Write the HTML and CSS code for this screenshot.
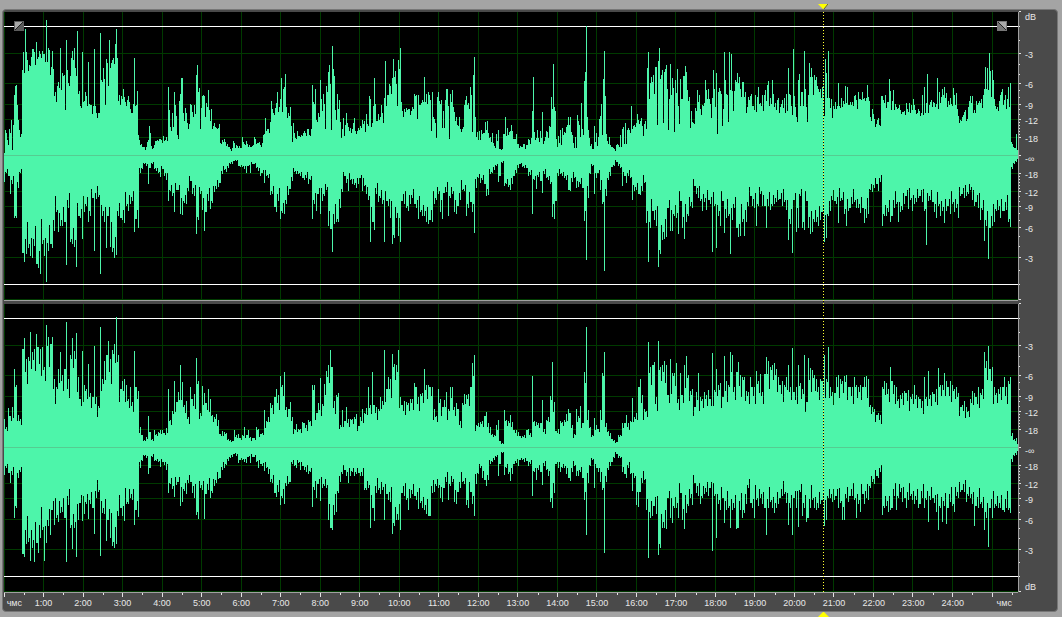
FILE: index.html
```html
<!DOCTYPE html>
<html lang="ru">
<head>
<meta charset="utf-8">
<title>Waveform</title>
<link rel="stylesheet" href="styles.css">
</head>
<body>
<main class="editor">
  <section class="track" aria-label="Left channel">
    <svg class="wave" data-channel="left" viewBox="0 0 1014 288" preserveAspectRatio="none"></svg>
    <div class="scale">
      <svg class="scale-ticks" viewBox="0 0 4 288" preserveAspectRatio="none"></svg>
      <div class="scale-labels">
        <span>dB</span><span>-3</span><span>-6</span><span>-9</span><span>-12</span><span>-18</span><span>-∞</span><span>-18</span><span>-12</span><span>-9</span><span>-6</span><span>-3</span><span></span>
      </div>
    </div>
  </section>
  <section class="track" aria-label="Right channel">
    <svg class="wave" data-channel="right" viewBox="0 0 1014 288" preserveAspectRatio="none"></svg>
    <div class="scale">
      <svg class="scale-ticks" viewBox="0 0 4 288" preserveAspectRatio="none"></svg>
      <div class="scale-labels">
        <span></span><span>-3</span><span>-6</span><span>-9</span><span>-12</span><span>-18</span><span>-∞</span><span>-18</span><span>-12</span><span>-9</span><span>-6</span><span>-3</span><span>dB</span>
      </div>
    </div>
  </section>
  <footer class="ruler">
    <svg class="ruler-ticks" viewBox="0 0 1014 4" preserveAspectRatio="none"></svg>
    <div class="ruler-labels">
      <span class="unit">чмс</span><span>1:00</span><span>2:00</span><span>3:00</span><span>4:00</span><span>5:00</span><span>6:00</span><span>7:00</span><span>8:00</span><span>9:00</span><span>10:00</span><span>11:00</span><span>12:00</span><span>13:00</span><span>14:00</span><span>15:00</span><span>16:00</span><span>17:00</span><span>18:00</span><span>19:00</span><span>20:00</span><span>21:00</span><span>22:00</span><span>23:00</span><span>24:00</span><span class="unit unit-end">чмс</span>
    </div>
  </footer>
</main>
<div class="cursor">
  <svg class="cursor-mark" viewBox="0 0 11 5"><path d="M0 0H11L6 5H5Z" fill="#ff0"/><path d="M10 0L6 5" stroke="#555" fill="none"/></svg>
  <div class="cursor-line"></div>
  <svg class="cursor-mark" viewBox="0 0 11 5"><path d="M5 0H6L11 5H0Z" fill="#ff0"/></svg>
</div>
<script src="wave.js"></script>
</body>
</html>
```
FILE: styles.css
```css
* { box-sizing: border-box; }

body {
  margin: 0;
  min-height: 100vh;
  padding: 9px 4px 5px 2px;
  display: flex;
  position: relative;
  background: #a4a4a4;
  font-family: "Liberation Sans", Arial, sans-serif;
  font-size: 9px;
  line-height: 10px;
  color: #e8e8e8;
}

.editor {
  flex: 1;
  min-width: 0;
  display: flex;
  flex-direction: column;
  padding: 2px 0 0 1px;
  background: #4a4a4a;
  border: 1px solid #777;
  border-radius: 4px;
}

.track {
  flex: 1;
  min-height: 0;
  display: grid;
  grid-template-columns: minmax(0, 1fr) 39px;
}

.track + .track { margin-top: 3px; }

.wave {
  display: block;
  width: 100%;
  height: 100%;
  min-height: 0;
  background: #000;
  border-bottom: 1px solid #a0a0a0;
  shape-rendering: crispEdges;
}

.grid-lines { fill: #003a00; }
.level { fill: #fff; }
.signal { fill: #4df5aa; }
.zero { fill: #55cc91; }

.scale {
  display: flex;
  gap: 3px;
  min-height: 0;
  padding-bottom: 1px;
}

.scale-ticks {
  width: 4px;
  height: 100%;
  border-left: 1px solid #a0a0a0;
  overflow: visible;
  shape-rendering: crispEdges;
}

.scale-ticks path, .ruler-ticks path { fill: #e4e4e4; }

.scale-labels {
  flex: 1;
  display: grid;
  grid-template-rows: 38fr 30fr 21fr 15fr 18fr 20fr 16fr 18fr 15fr 21fr 30fr 36fr 10fr;
}

.scale-labels span { min-height: 0; }

.ruler {
  height: 18px;
  padding-right: 39px;
}

.ruler-ticks {
  display: block;
  width: 100%;
  height: 4px;
  shape-rendering: crispEdges;
}

.ruler-labels {
  display: grid;
  grid-template-columns: 1fr repeat(24, 2fr) minmax(0, 2fr);
  padding: 1px 6px 0 0;
  text-align: center;
  white-space: nowrap;
}

.ruler-labels span { min-width: 0; }
.unit { padding-left: 1px; }
.unit-end { text-align: right; }

/* Play cursor spans both channels and the margins around them */
.cursor {
  position: absolute;
  top: 4px;
  bottom: 0;
  left: 77%;
  width: 11px;
  display: flex;
  flex-direction: column;
  align-items: center;
  pointer-events: none;
}

.cursor-mark { width: 11px; height: 5px; }

.cursor-line {
  flex: 1;
  width: 1px;
  margin: 3px 0 20px;
  background: repeating-linear-gradient(#ffff30 0 1px, #000 1px 2px, transparent 2px 3px);
}
```
FILE: wave.js
```
// Peak heights by start column; each row covers 20 columns.
// A row holds either one value per column or one value per pair of columns.
const peaks = {
  left: {
    up: `4: 2 25 22 15 10 26 22 35 5 30 60 69 70 50 35 25 18 21 85 103
24: 82 126 103 95 84 90 89 98 106 106 103 90 113 96 98 104 101 97 104 101
44: 101 93 135 93 107 105 80 88 104 86 59 63 53 69 73 67 107 65 82 79
64: 80 45 115 85 72 69 79 97 104 95 107 87 79 124 61 64 49 47 103 53
84: 54 63 59 49 93 51 50 50 41 49 106 49 42 37 42 42 122 75 73 87
104: 76 50 96 92 69 115 87 92 95 97 91 111 126 97 54 60 50 59 56 66
124: 58 53 49 55 59 53 46 42 42 51 97 49 50 64 20 15 10 11 8 8
144: 8 5 8 13 15 29 22 9 6 7 10 14 14 15 14 16 16 15 12 19
164: 14 15 18 14 68 45 28 24 42 28 63 50 39 20 16 54 61 77 77 42
184: 34 47 42 32 26 31 51 50 43 38 50 41 80 90 63 67 26 47 59 60
204: 59 38 52 48 65 45 34 46 26 29 32 28 27 26 27 31 12 11 15 13
224: 16 13 9 11 8 8 6 4 7 14 12 7 10 9 7 9 7 7 18 13
244: 11 10 14 11 8 10 8 8 9 10 18 16 11 12 12 13 10 8 12 20
264: 21 37 24 26 26 22 33 54 46 42 40 47 52 63 43 48 56 77 43 66
284: 68 81 48 37 42 39 48 29 13 32 22 17 16 24 19 19 18 20 19 22
304: 24 22 19 26 26 20 19 26 70 53 51 66 35 33 42 38 75 56 44 61
324: 51 26 69 63 83 90 71 25 109 86 79 45 35 61 46 55 33 17 26 37
344: 19 30 42 32 28 24 27 22 26 32 37 24 21 24 27 25 29 27 35 31
364: 34 23 41 31 29 59 56 28 32 49 77 51 34 34 41 35 38 50 42 32
384: 57 94 49 60 60 71 69 61 77 96 78 84 71 49 95 86 107 53 44 38
404: 46 43 47 45 46 46 40 44 48 46 61 59 60 36 60 50 50 52 55 53
424: 78 53 61 51 63 60 55 24 63 38 36 32 17 58 63 54 51 55 27 44
444: 27 55 66 66 49 16 61 53 65 48 43 34 38 30 29 38 26 23 26 28
464: 50 55 59 50 52 46 68 60 23 80 98 38 18 23 15 24 15 25 21 22
484: 22 33 25 34 22 17 18 13 22 12 9 7 21 14 25 6 6 5 6 21
504: 21 38 19 27 20 23 24 30 24 16 16 16 21 11 11 7 9 8 8 11
524: 11 6 10 10 16 15 11 17 44 78 23 15 17 25 17 13 24 17 43 11
544: 14 18 24 23 17 29 28 58 46 91 48 44 16 8 19 12 25 10 27 20
564: 23 22 28 30 38 30 38 23 20 12 7 18 7 40 34 30 18 52 26 20
584: 74 83 129 38 25 17 9 11 6 6 29 13 22 9 18 36 39 51 20 76
604: 104 59 21 14 11 18 10 8 8 7 6 4 10 11 10 8 20 8 26 28
624: 11 32 11 25 27 25 22 49 26 29 30 28 32 41 35 31 34 37 29 19
644: 31 34 26 87 103 56 72 78 73 80 61 88 88 30 94 107 76 80 85 32
664: 83 86 90 66 25 56 91 60 77 67 23 75 62 86 49 31 76 56 56 79
684: 79 89 83 65 54 58 27 44 33 32 31 47 44 65 53 60 46 40 50 49
704: 52 75 65 56 66 56 51 37 57 85 66 48 82 21 63 67 64 61 29 46
724: 103 75 61 60 33 103 65 101 64 44 64 75 73 82 72 78 66 58 73 73
744: 58 63 42 48 58 55 59 61 49 49 45 60 43 58 68 51 52 49 60 44
764: 60 65 54 70 74 49 57 51 75 61 48 52 45 55 57 42 48 51 55 47
784: 57 42 61 44 87 61 60 49 40 106 59 48 38 33 75 81 49 63 63 49
804: 104 66 48 33 60 92 78 87 78 60 80 75 78 69 66 63 66 57 68 76
824: 39 96 82 57 104 57 47 56 37 49 46 53 46 49 72 49 47 57 48 54
844: 51 69 52 68 50 50 53 50 53 49 59 60 55 46 63 56 56 55 63 56
864: 57 54 57 70 58 54 38 34 46 41 36 28 31 35 37 30 29 59 59 55
884: 52 60 47 53 53 76 64 45 54 65 45 51 48 46 47 50 45 41 43 43
904: 44 40 52 46 43 52 42 50 45 56 50 45 41 42 46 44 39 42 60 40
924: 68 42 52 81 42 50 53 55 48 53 52 48 51 77 46 63 52 58 66 60
944: 68 57 62 48 54 50 57 51 49 67 60 50 62 46 39 32 35 34 38 40
964: 43 45 34 36 48 54 59 52 59 42 45 42 54 50 52 54 52 56 47 60
984: 66 88 66 87 65 102 84 58 85 75 56 49 46 48 44 54 60 63 66 50
1004: 55 60 46 56 68 48 72 13 11 8 7 7 21 5`,
    down: `4: 26 17 20 38 28 62 62 32 17 97
24: 106 98 92 100 102 90 108 112 118 88
44: 100 126 95 88 92 75 56 76 70 70
64: 66 109 52 86 88 91 111 60 62 83
84: 56 50 66 60 42 95 43 41 118 60
104: 66 92 60 91 96 102 99 60 62 64
124: 67 50 55 48 45 76 63 72 17 13
144: 8 10 28 12 8 13 15 17 21 13
164: 20 24 45 35 40 56 34 34 58 59
184: 47 48 35 25 38 40 78 64 38 54
204: 75 56 45 53 47 36 33 31 27 18
224: 14 16 12 8 8 5 5 10 11 11
244: 13 17 10 17 8 8 12 15 20 17
264: 27 20 22 39 38 51 56 45 63 57
284: 58 48 39 33 25 16 18 18 20 22
304: 24 22 28 24 63 48 55 38 58 45
324: 40 34 70 73 96 68 66 66 52 36
344: 20 27 35 24 28 29 32 28 22 35
364: 30 38 44 86 66 74 38 46 42 48
384: 86 45 50 62 88 82 62 80 86 45
404: 48 52 55 48 42 48 52 63 56 60
424: 60 66 68 64 66 48 44 38 56 63
444: 37 36 60 42 38 56 58 50 44 34
464: 35 60 52 46 56 77 32 22 27 24
484: 28 40 39 18 17 14 10 26 20 7
504: 30 28 31 34 28 20 17 12 8 11
524: 12 12 20 19 58 24 33 21 25 37
544: 18 22 24 28 61 63 45 20 18 20
564: 22 24 34 35 26 22 32 31 28 32
584: 65 104 42 18 10 38 22 17 34 48
604: 115 40 24 20 11 10 6 10 12 30
624: 20 27 20 22 44 35 34 38 39 35
644: 27 67 106 72 55 64 70 111 98 84
664: 83 81 52 75 75 60 62 78 45 72
684: 83 66 60 50 52 30 38 42 45 55
704: 46 54 44 48 96 50 92 60 70 45
724: 77 62 60 98 64 52 72 81 80 66
744: 80 66 50 40 50 52 70 50 38 50
764: 50 72 50 54 50 48 46 44 43 50
784: 46 54 84 68 97 44 76 72 40 72
804: 74 45 72 78 76 66 66 70 64 56
824: 86 82 60 55 44 45 48 67 45 44
844: 58 70 55 52 48 46 52 52 57 52
864: 67 62 58 34 36 32 28 35 26 70
884: 60 60 56 66 60 52 48 66 56 54
904: 48 40 53 44 55 48 46 42 40 46
924: 55 89 45 44 46 56 62 50 60 55
944: 67 55 50 58 48 56 52 62 40 38
964: 42 40 38 34 44 50 46 52 64 54
984: 85 70 103 72 70 66 55 54 62 55
1004: 55 54 66 71 13 8 6`
  },
  right: {
    up: `4: 28 20 39 31 40 78 62 32 28 98
24: 109 88 90 115 95 98 113 100 98 100
44: 80 122 110 103 110 68 60 78 95 72
64: 78 125 68 92 109 96 114 70 48 96
84: 62 58 83 54 50 101 50 41 120 68
104: 86 92 106 88 97 103 130 92 58 66
124: 68 62 48 60 45 96 60 56 20 12
144: 7 10 31 15 8 17 13 15 17 17
164: 14 19 58 27 36 66 45 55 82 65
184: 42 46 30 60 48 53 89 66 34 61
204: 54 44 58 48 32 30 33 27 13 16
224: 15 14 8 7 6 17 12 13 9 12
244: 20 12 17 10 9 9 20 18 13 14
264: 37 26 30 44 42 50 58 52 71 62
284: 75 40 38 45 30 18 23 18 18 25
304: 24 22 27 26 62 62 34 44 69 43
324: 63 76 82 97 80 46 52 54 22 37
344: 26 40 28 28 28 30 33 21 30 38
364: 34 39 60 42 75 42 40 38 50 46
384: 97 58 70 68 93 83 82 97 50 42
404: 46 45 44 48 48 64 60 50 53 54
424: 78 62 62 60 60 38 31 58 48 40
444: 47 55 38 60 60 40 44 38 26 44
464: 53 52 53 60 84 92 22 24 25 26
484: 31 35 24 20 13 12 22 27 6 4
504: 37 27 26 32 25 17 17 15 11 11
524: 12 17 18 14 71 26 25 24 24 47
544: 18 27 30 51 85 45 16 18 26 25
564: 27 33 38 34 22 13 38 31 41 24
584: 75 120 37 20 12 29 22 18 37 74
604: 95 24 16 14 8 7 5 12 12 24
624: 24 32 24 26 49 30 34 60 68 52
644: 38 36 105 80 82 85 50 106 80 82
664: 86 82 52 88 74 74 84 48 74 52
684: 82 91 72 56 58 40 55 74 50 48
704: 55 52 57 48 94 57 78 62 64 50
724: 91 66 62 95 92 60 75 85 72 70
744: 70 56 55 70 60 60 76 66 73 55
764: 73 90 86 80 82 84 78 70 62 66
784: 62 70 82 60 99 55 60 82 64 58
804: 92 45 89 79 77 72 68 60 68 66
824: 92 68 100 60 55 54 70 72 68 66
844: 71 72 60 60 60 70 62 60 62 60
864: 70 71 68 42 40 38 32 34 32 60
884: 66 64 58 80 66 62 60 48 52 54
904: 56 54 57 50 53 62 52 50 48 46
924: 70 50 76 52 55 53 58 79 62 62
944: 74 66 60 66 62 58 60 54 40 42
964: 46 40 36 48 56 54 50 60 54 58
984: 95 86 101 78 80 60 54 58 60 60
1004: 70 60 66 70 14 8 9`,
    down: `4: 27 20 25 35 27 70 60 30 24 106
24: 109 96 94 113 100 114 95 105 90 82
44: 113 95 78 87 62 77 70 74 65 64
64: 70 114 57 80 101 80 109 72 55 73
84: 66 56 71 56 60 86 50 44 108 65
104: 66 93 72 90 98 100 96 68 60 68
124: 73 56 56 50 52 77 62 69 20 13
144: 8 10 26 20 9 13 13 14 19 14
164: 17 22 45 36 41 49 37 34 58 54
184: 43 46 35 34 45 50 67 71 40 42
204: 71 46 42 50 45 38 35 31 30 22
224: 20 17 13 10 9 6 8 15 12 12
244: 14 15 9 15 9 9 14 20 16 18
264: 23 20 26 34 35 45 49 44 57 50
284: 56 38 36 34 16 18 20 15 22 18
304: 22 24 26 24 59 42 50 36 53 40
324: 38 40 72 80 82 67 64 45 34 26
344: 22 28 35 28 24 28 26 25 28 28
364: 42 42 40 80 60 73 45 42 46 42
384: 72 46 52 54 86 78 72 72 82 45
404: 48 52 62 50 46 48 52 61 55 60
424: 62 66 68 68 45 44 38 40 50 54
444: 40 34 52 38 34 54 56 44 40 34
464: 36 57 60 44 56 68 36 26 20 30
484: 32 38 32 16 14 12 9 28 16 5
504: 27 20 26 33 26 16 15 18 12 12
524: 14 13 18 16 48 24 32 22 24 37
544: 18 22 28 54 60 45 16 20 24 20
564: 20 26 30 33 24 18 28 28 24 30
584: 52 87 35 18 12 40 20 24 34 42
604: 105 34 22 18 14 10 6 10 10 24
624: 26 30 20 26 43 30 57 59 44 35
644: 32 62 110 70 68 58 66 107 100 80
664: 80 81 50 70 75 60 60 70 45 72
684: 81 65 58 50 57 35 45 48 56 50
704: 46 44 48 40 103 48 90 56 62 50
724: 75 62 60 80 62 60 81 80 62 70
744: 65 56 40 55 60 70 52 58 50 56
764: 60 87 60 54 60 65 60 56 50 48
784: 46 55 77 60 87 50 60 79 44 68
804: 60 74 70 60 52 60 62 60 56 52
824: 78 72 50 50 54 52 48 60 55 72
844: 72 50 54 48 48 52 70 56 64 46
864: 56 50 52 40 34 36 28 30 24 67
884: 60 58 64 62 60 48 62 50 44 54
904: 50 60 52 48 52 56 52 60 56 50
924: 60 52 74 52 50 55 64 82 60 74
944: 58 76 60 54 58 64 48 50 44 42
964: 44 54 48 50 56 78 58 60 56 60
984: 82 70 99 60 70 60 58 60 60 62
1004: 64 60 62 65 14 8 7`
  }
};

const WIDTH = 1014;
const HEIGHT = 288;
const ZERO = 143;
const ORIGIN = 4;
const MINUTE = 39.52;

// Share of the lower neighbour that a column between two paired peaks gets
const DIPS = [0.92, 0.78, 1, 0.85, 0.72, 0.96, 0.82];

// Turn the rows into one height per column.
function columns(text) {
  const out = [];
  for (const line of text.split("\n")) {
    const [start, list] = line.split(":");
    const x0 = Number(start) - ORIGIN;
    const values = list.trim().split(" ").map(Number);
    const step = values.length > 10 ? 1 : 2;
    values.forEach((v, i) => { out[x0 + step * i] = v; });
  }
  for (let x = 0; x < WIDTH; x++) {
    if (out[x] === undefined) {
      const low = Math.min(out[x - 1] ?? 3, out[x + 1] ?? 3);
      out[x] = Math.round(low * DIPS[((x - 1) / 2) % DIPS.length]);
    }
  }
  return out;
}

const rect = (x, y, w, h) => `M${x} ${y}h${w}v${h}h${-w}z`;

function drawWave(svg) {
  const data = peaks[svg.dataset.channel];
  const up = columns(data.up);
  const down = columns(data.down);
  let grid = "";
  for (let m = 0; m <= 25; m++) grid += rect(Math.floor(m * MINUTE), 0, 1, HEIGHT);
  for (const d of [18, 36, 51, 72, 102]) {
    grid += rect(0, ZERO - d, WIDTH, 1) + rect(0, ZERO + d, WIDTH, 1);
  }
  grid += rect(0, HEIGHT - 1, WIDTH, 1);
  const level = rect(0, ZERO - 129, WIDTH, 1) + rect(0, ZERO + 129, WIDTH, 1);
  const signal = up.map((u, x) => rect(x, ZERO - u, 1, u + down[x] + 1)).join("");
  let handles = "";
  if (svg.dataset.channel === "left") {
    handles =
      `<g transform="translate(10 9)"><path d="M0 0h10v10h-10z" fill="#5c5c5c"/><path d="M1 1h8L1 9z" fill="#a8a8a8"/><path d="M1 9L9 1" stroke="#222"/></g>` +
      `<g transform="translate(993 9)"><path d="M0 0h10v10h-10z" fill="#777"/><path d="M1 1h8v8z" fill="#a8a8a8"/><path d="M1 1L9 9" stroke="#222"/></g>`;
  }
  svg.innerHTML =
    `<path class="grid-lines" d="${grid}"/><path class="level" d="${level}"/>` +
    `<path class="signal" d="${signal}"/><path class="zero" d="${rect(0, ZERO, WIDTH, 1)}"/>${handles}`;
}

function drawScale(svg) {
  let d = rect(0, ZERO, 3, 1);
  for (const v of [18, 36, 51, 72, 102, 144]) {
    d += rect(0, ZERO - v, 3, 1) + rect(0, ZERO + v, 3, 1);
  }
  for (const v of [21, 24, 27, 30, 33, 41, 46, 58, 65, 81, 91, 115, 129]) {
    d += rect(0, ZERO - v, 1, 1) + rect(0, ZERO + v, 1, 1);
  }
  svg.innerHTML = `<path d="${d}"/>`;
}

function drawRuler(svg) {
  let d = "";
  for (let m = 0; m <= 25; m++) {
    d += rect(Math.floor(m * MINUTE), 0, 1, 4) + rect(Math.round((m + 0.5) * MINUTE), 0, 1, 2);
  }
  svg.innerHTML = `<path d="${d}"/>`;
}

document.querySelectorAll(".wave").forEach(drawWave);
document.querySelectorAll(".scale-ticks").forEach(drawScale);
document.querySelectorAll(".ruler-ticks").forEach(drawRuler);
```
